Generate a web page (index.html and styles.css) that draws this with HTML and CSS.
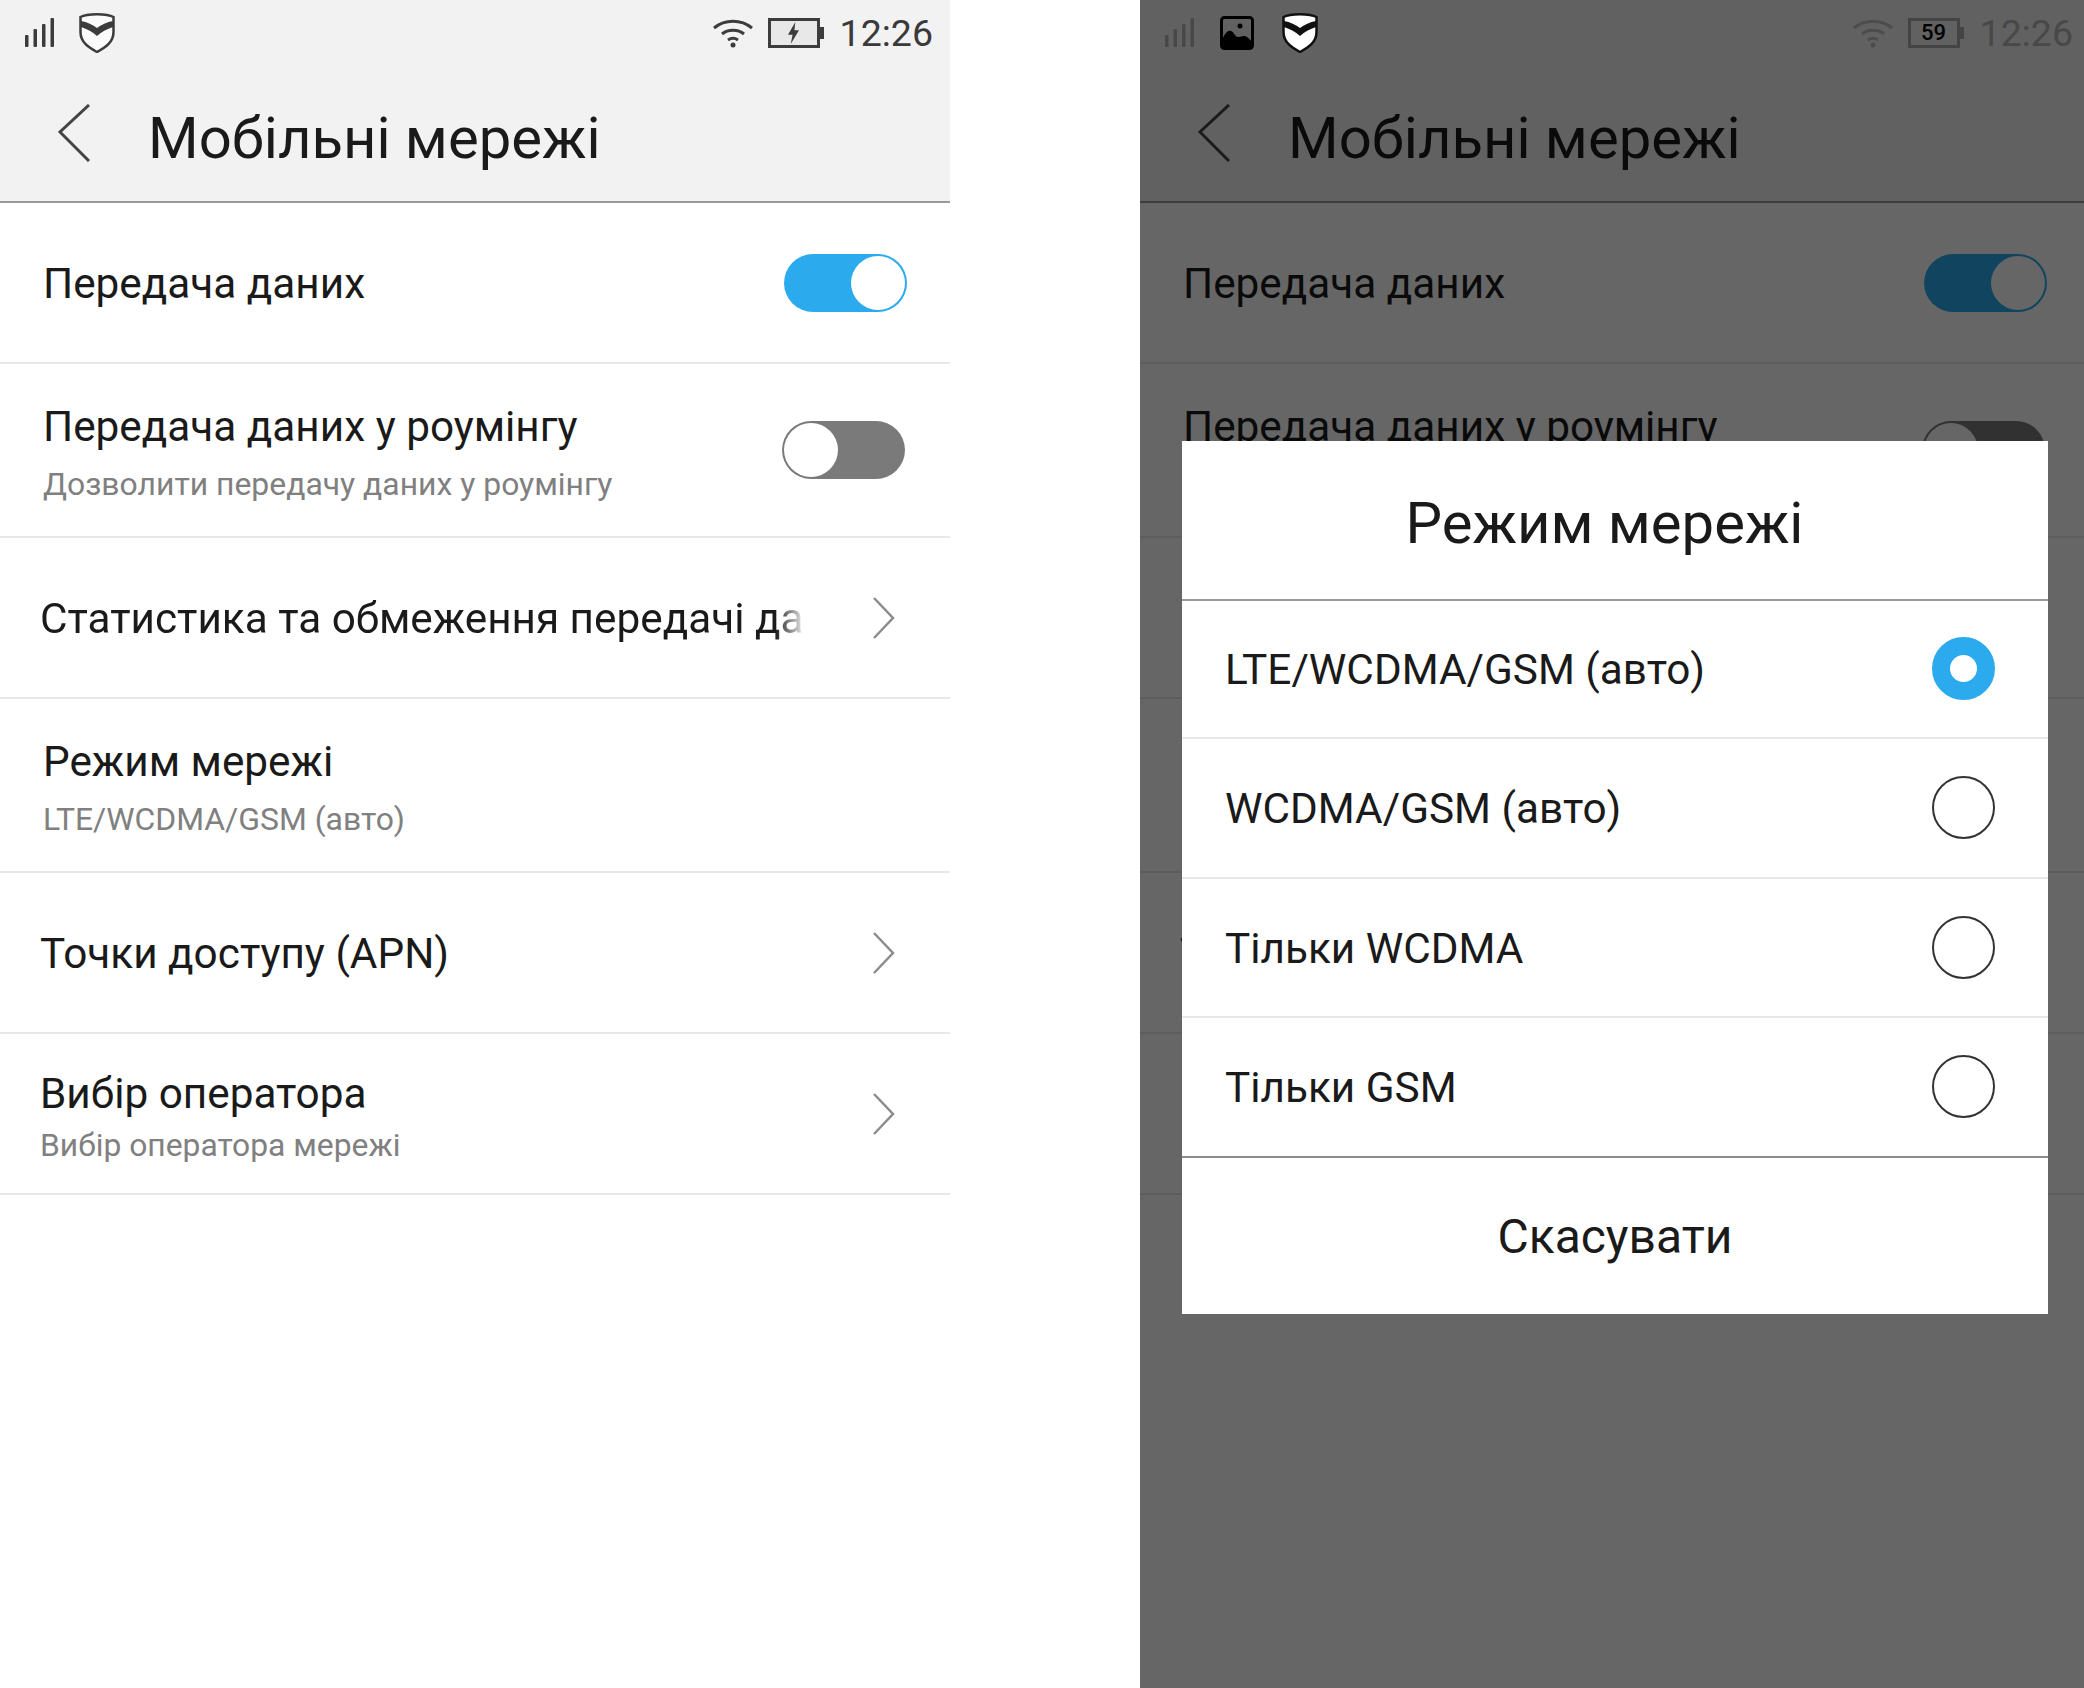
FILE: index.html
```html
<!DOCTYPE html>
<html lang="uk">
<head>
    <meta charset="UTF-8">
    <meta name="viewport" content="width=device-width, initial-scale=1.0">
    <title>Мобільні мережі</title>
    <link rel="stylesheet" href="styles.css">
</head>
<body>
    <svg class="defs" width="0" height="0">
        <symbol id="signal" viewBox="0 0 30 30">
            <rect x="0" y="17" width="3.5" height="12" rx="1"/>
            <rect x="8.5" y="11" width="3.5" height="18" rx="1"/>
            <rect x="17" y="6" width="3.5" height="23" rx="1"/>
            <rect x="25.5" y="0" width="3.5" height="29" rx="1"/>
        </symbol>
        <symbol id="wifi" viewBox="0 0 40 30">
            <path d="M1 10 C12 1 28 1 39 10" fill="none" stroke="currentColor" stroke-width="3"/>
            <path d="M9 16 C15 11 25 11 31 16" fill="none" stroke="currentColor" stroke-width="3"/>
            <path d="M15 22 C18 20 22 20 25 22" fill="none" stroke="currentColor" stroke-width="3"/>
            <circle cx="20" cy="27" r="2.5" fill="currentColor"/>
        </symbol>
    </svg>

    <div class="page">
        <!-- settings screen -->
        <section class="phone">
            <div class="status">
                <svg class="ic-signal"><use href="#signal"/></svg>
                <svg class="ic-shield" viewBox="0 0 36 41">
                    <path class="shield-body" d="M1.5 5 C8 1.2 28 1.2 34.5 5 L34.5 20 C34.5 30 27 35 18 40 C9 35 1.5 30 1.5 20 Z"/>
                    <path class="shield-mark" d="M2 9 C8 10 14 13 18 16 C22 13 28 10 34 9 L34 15 C28 17 22 20 18 24 C14 20 8 17 2 15 Z"/>
                </svg>
                <div class="status-right">
                    <svg class="ic-wifi"><use href="#wifi"/></svg>
                    <div class="battery"><svg class="flash" viewBox="0 0 14 24"><path d="M9 0 L1 14 L6 14 L4 24 L13 9 L8 9 Z"/></svg></div>
                    <span class="time">12:26</span>
                </div>
            </div>
            <header class="topbar">
                <svg class="back" viewBox="0 0 32 58"><path d="M31 1 L2 28 L31 57"/></svg>
                <h1>Мобільні мережі</h1>
            </header>
            <div class="row">
                <div class="label">Передача даних</div>
                <div class="toggle on"><span class="knob"></span></div>
            </div>
            <div class="row tall">
                <div class="stack">
                    <div class="label">Передача даних у роумінгу</div>
                    <div class="sub">Дозволити передачу даних у роумінгу</div>
                </div>
                <div class="toggle"><span class="knob"></span></div>
            </div>
            <div class="row link">
                <div class="label fade">Статистика та обмеження передачі даних</div>
                <svg class="chevron" viewBox="0 0 22 42"><path d="M1 1 L20 21 L1 41"/></svg>
            </div>
            <div class="row tall">
                <div class="stack">
                    <div class="label">Режим мережі</div>
                    <div class="sub">LTE/WCDMA/GSM (авто)</div>
                </div>
            </div>
            <div class="row link">
                <div class="label">Точки доступу (APN)</div>
                <svg class="chevron" viewBox="0 0 22 42"><path d="M1 1 L20 21 L1 41"/></svg>
            </div>
            <div class="row link">
                <div class="stack tight">
                    <div class="label">Вибір оператора</div>
                    <div class="sub">Вибір оператора мережі</div>
                </div>
                <svg class="chevron" viewBox="0 0 22 42"><path d="M1 1 L20 21 L1 41"/></svg>
            </div>
        </section>

        <!-- same screen with the dialog open -->
        <section class="phone dimmed">
            <div class="status">
                <svg class="ic-signal"><use href="#signal"/></svg>
                <svg class="ic-image" viewBox="0 0 34 34">
                    <rect x="1.5" y="1.5" width="31" height="31" rx="3" fill="none" stroke="#000" stroke-width="3"/>
                    <circle cx="20" cy="10" r="2.5"/>
                    <path d="M2 24 C5 17 8 14 11 15 C14 16 15 21 18 21 C21 21 24 19 27 21 C29 23 31 24 32 26 L32 32 L2 32 Z"/>
                </svg>
                <svg class="ic-shield" viewBox="0 0 36 41">
                    <path class="shield-body" d="M1.5 5 C8 1.2 28 1.2 34.5 5 L34.5 20 C34.5 30 27 35 18 40 C9 35 1.5 30 1.5 20 Z"/>
                    <path class="shield-mark" d="M2 9 C8 10 14 13 18 16 C22 13 28 10 34 9 L34 15 C28 17 22 20 18 24 C14 20 8 17 2 15 Z"/>
                </svg>
                <div class="status-right">
                    <svg class="ic-wifi"><use href="#wifi"/></svg>
                    <div class="battery"><span class="level">59</span></div>
                    <span class="time">12:26</span>
                </div>
            </div>
            <header class="topbar">
                <svg class="back" viewBox="0 0 32 58"><path d="M31 1 L2 28 L31 57"/></svg>
                <h1>Мобільні мережі</h1>
            </header>
            <div class="row">
                <div class="label">Передача даних</div>
                <div class="toggle on"><span class="knob"></span></div>
            </div>
            <div class="row tall">
                <div class="stack">
                    <div class="label">Передача даних у роумінгу</div>
                    <div class="sub">Дозволити передачу даних у роумінгу</div>
                </div>
                <div class="toggle"><span class="knob"></span></div>
            </div>
            <div class="row link"></div>
            <div class="row tall"></div>
            <div class="row link">
                <div class="label">Точки доступу (APN)</div>
            </div>
            <div class="row link"></div>

            <div class="scrim"></div>

            <div class="dialog">
                <div class="dialog-title">Режим мережі</div>
                <div class="option first">
                    <span>LTE/WCDMA/GSM (авто)</span>
                    <span class="radio checked"></span>
                </div>
                <div class="option">
                    <span>WCDMA/GSM (авто)</span>
                    <span class="radio"></span>
                </div>
                <div class="option">
                    <span>Тільки WCDMA</span>
                    <span class="radio"></span>
                </div>
                <div class="option last">
                    <span>Тільки GSM</span>
                    <span class="radio"></span>
                </div>
                <div class="cancel">Скасувати</div>
            </div>
        </section>
    </div>
</body>
</html>
```

FILE: styles.css
```css
body {
    margin: 0;
    background-color: #fff;
    font-family: Roboto, "Noto Sans", sans-serif;
    color: #1a1a1a;
    overflow: hidden;
}
.defs {
    position: absolute;
}
.page {
    display: flex;
    gap: 190px;
    width: 2084px;
    height: 1688px;
    overflow: hidden;
}
.phone {
    position: relative;
    flex: 0 0 950px;
    height: 1688px;
    background-color: #fff;
}

/* status bar */
.status {
    display: flex;
    align-items: center;
    height: 65px;
    padding: 0 17px 0 25px;
    background-color: #f2f2f2;
    color: #3c3c3c;
    position: relative;
}
.ic-signal {
    width: 30px;
    height: 30px;
    fill: #3c3c3c;
}
.ic-shield {
    width: 36px;
    height: 41px;
    margin: 0 0 0 24px;
}
.shield-body {
    fill: #fbfbfb;
    stroke: #3c3c3c;
    stroke-width: 2.5;
}
.shield-mark {
    fill: #3c3c3c;
}
.status-right {
    display: flex;
    align-items: center;
    margin-left: auto;
}
.ic-wifi {
    width: 40px;
    height: 30px;
    color: #3c3c3c;
}
.battery {
    position: relative;
    box-sizing: border-box;
    display: flex;
    align-items: center;
    justify-content: center;
    width: 52px;
    height: 30px;
    margin: 0 20px 0 15px;
    border: 3px solid #3c3c3c;
    background-color: #e8e8e8;
}
.battery::after {
    content: "";
    position: absolute;
    right: -7px;
    top: 6px;
    width: 4px;
    height: 12px;
    background-color: #3c3c3c;
}
.flash {
    width: 13px;
    height: 22px;
    fill: #3c3c3c;
}
.time {
    font-size: 37.5px;
    font-weight: 400;
    line-height: 1;
    margin-top: 3px;
    color: #3a3a3a;
}

/* title bar */
.topbar {
    display: flex;
    align-items: center;
    box-sizing: border-box;
    height: 138px;
    padding-left: 58px;
    background-color: #f2f2f2;
    border-bottom: 2px solid #9a9a9a;
}
.back {
    width: 32px;
    height: 58px;
    margin-right: 58px;
    fill: none;
    stroke: #444;
    stroke-width: 3;
}
h1 {
    margin: 9px 0 0;
    font-size: 58px;
    font-weight: 400;
    color: #1a1a1a;
}

/* list rows */
.row {
    display: flex;
    align-items: center;
    justify-content: space-between;
    box-sizing: border-box;
    height: 161px;
    padding: 0 43px 0 43px;
    border-bottom: 2px solid #e8e8e8;
}
.row.tall {
    height: 174px;
    padding-right: 45px;
}
.row.link {
    padding: 0 55px 0 40px;
}
.label {
    padding-top: 2px;
    font-size: 42.3px;
    line-height: 50px;
    color: #1a1a1a;
}
.label.fade {
    width: 766px;
    overflow: hidden;
    white-space: nowrap;
    -webkit-mask-image: linear-gradient(to right, #000 96%, transparent);
    mask-image: linear-gradient(to right, #000 96%, transparent);
}
.stack {
    padding-top: 3px;
}
.sub {
    margin-top: 12px;
    font-size: 31.9px;
    line-height: 40px;
    color: #808080;
}
.stack.tight {
    padding-top: 6px;
}
.tight .label {
    line-height: 46px;
}
.tight .sub {
    margin-top: 8px;
    font-size: 31.8px;
}
.chevron {
    width: 22px;
    height: 42px;
    fill: none;
    stroke: #8c8c8c;
    stroke-width: 2.5;
}

/* switches */
.toggle {
    display: flex;
    box-sizing: border-box;
    width: 123px;
    height: 58px;
    padding: 2px;
    border-radius: 29px;
    background-color: #7a7a7a;
}
.toggle.on {
    justify-content: flex-end;
    background-color: #2babee;
}
.knob {
    width: 54px;
    height: 54px;
    border-radius: 50%;
    background-color: #fff;
}

/* dialog on the right */
.scrim {
    position: absolute;
    inset: 65px 0 0 0;
    background-color: rgba(0, 0, 0, 0.6);
}
.dimmed .status {
    background-color: #616161;
}
.dimmed .ic-signal {
    fill: #484848;
}
.dimmed .ic-image {
    width: 34px;
    height: 34px;
    margin-left: 25px;
    fill: #000;
}
.dimmed .ic-shield {
    margin-left: 28px;
}
.dimmed .shield-body {
    fill: #fff;
    stroke: #111;
}
.dimmed .shield-mark {
    fill: #111;
}
.dimmed .ic-wifi {
    color: #4c4c4c;
}
.dimmed .battery {
    background-color: transparent;
    border-color: #444;
}
.dimmed .battery::after {
    background-color: #444;
}
.level {
    font-size: 22px;
    font-weight: 500;
    color: #000;
}
.dimmed .time {
    color: #484848;
}
.dialog {
    position: absolute;
    left: 42px;
    top: 441px;
    width: 866px;
    background-color: #fff;
}
.dialog-title {
    box-sizing: border-box;
    height: 160px;
    padding: 17px 21px 0 0;
    border-bottom: 2px solid #9a9a9a;
    text-align: center;
    font-size: 58px;
    line-height: 130px;
    color: #1a1a1a;
}
.option {
    display: flex;
    align-items: center;
    justify-content: space-between;
    box-sizing: border-box;
    height: 139.5px;
    padding: 2px 53px 0 43px;
    border-bottom: 2px solid #e8e8e8;
    font-size: 42.3px;
    color: #1a1a1a;
}
.option.first {
    height: 138px;
    padding-top: 0;
}
.option.last {
    border-bottom-color: #8c8c8c;
}
.radio {
    box-sizing: border-box;
    width: 63px;
    height: 63px;
    margin-bottom: 2px;
    border: 2px solid #333;
    border-radius: 50%;
}
.radio.checked {
    border: 18px solid #2babee;
}
.cancel {
    height: 156px;
    text-align: center;
    font-size: 48px;
    line-height: 158px;
    color: #1a1a1a;
}
```
